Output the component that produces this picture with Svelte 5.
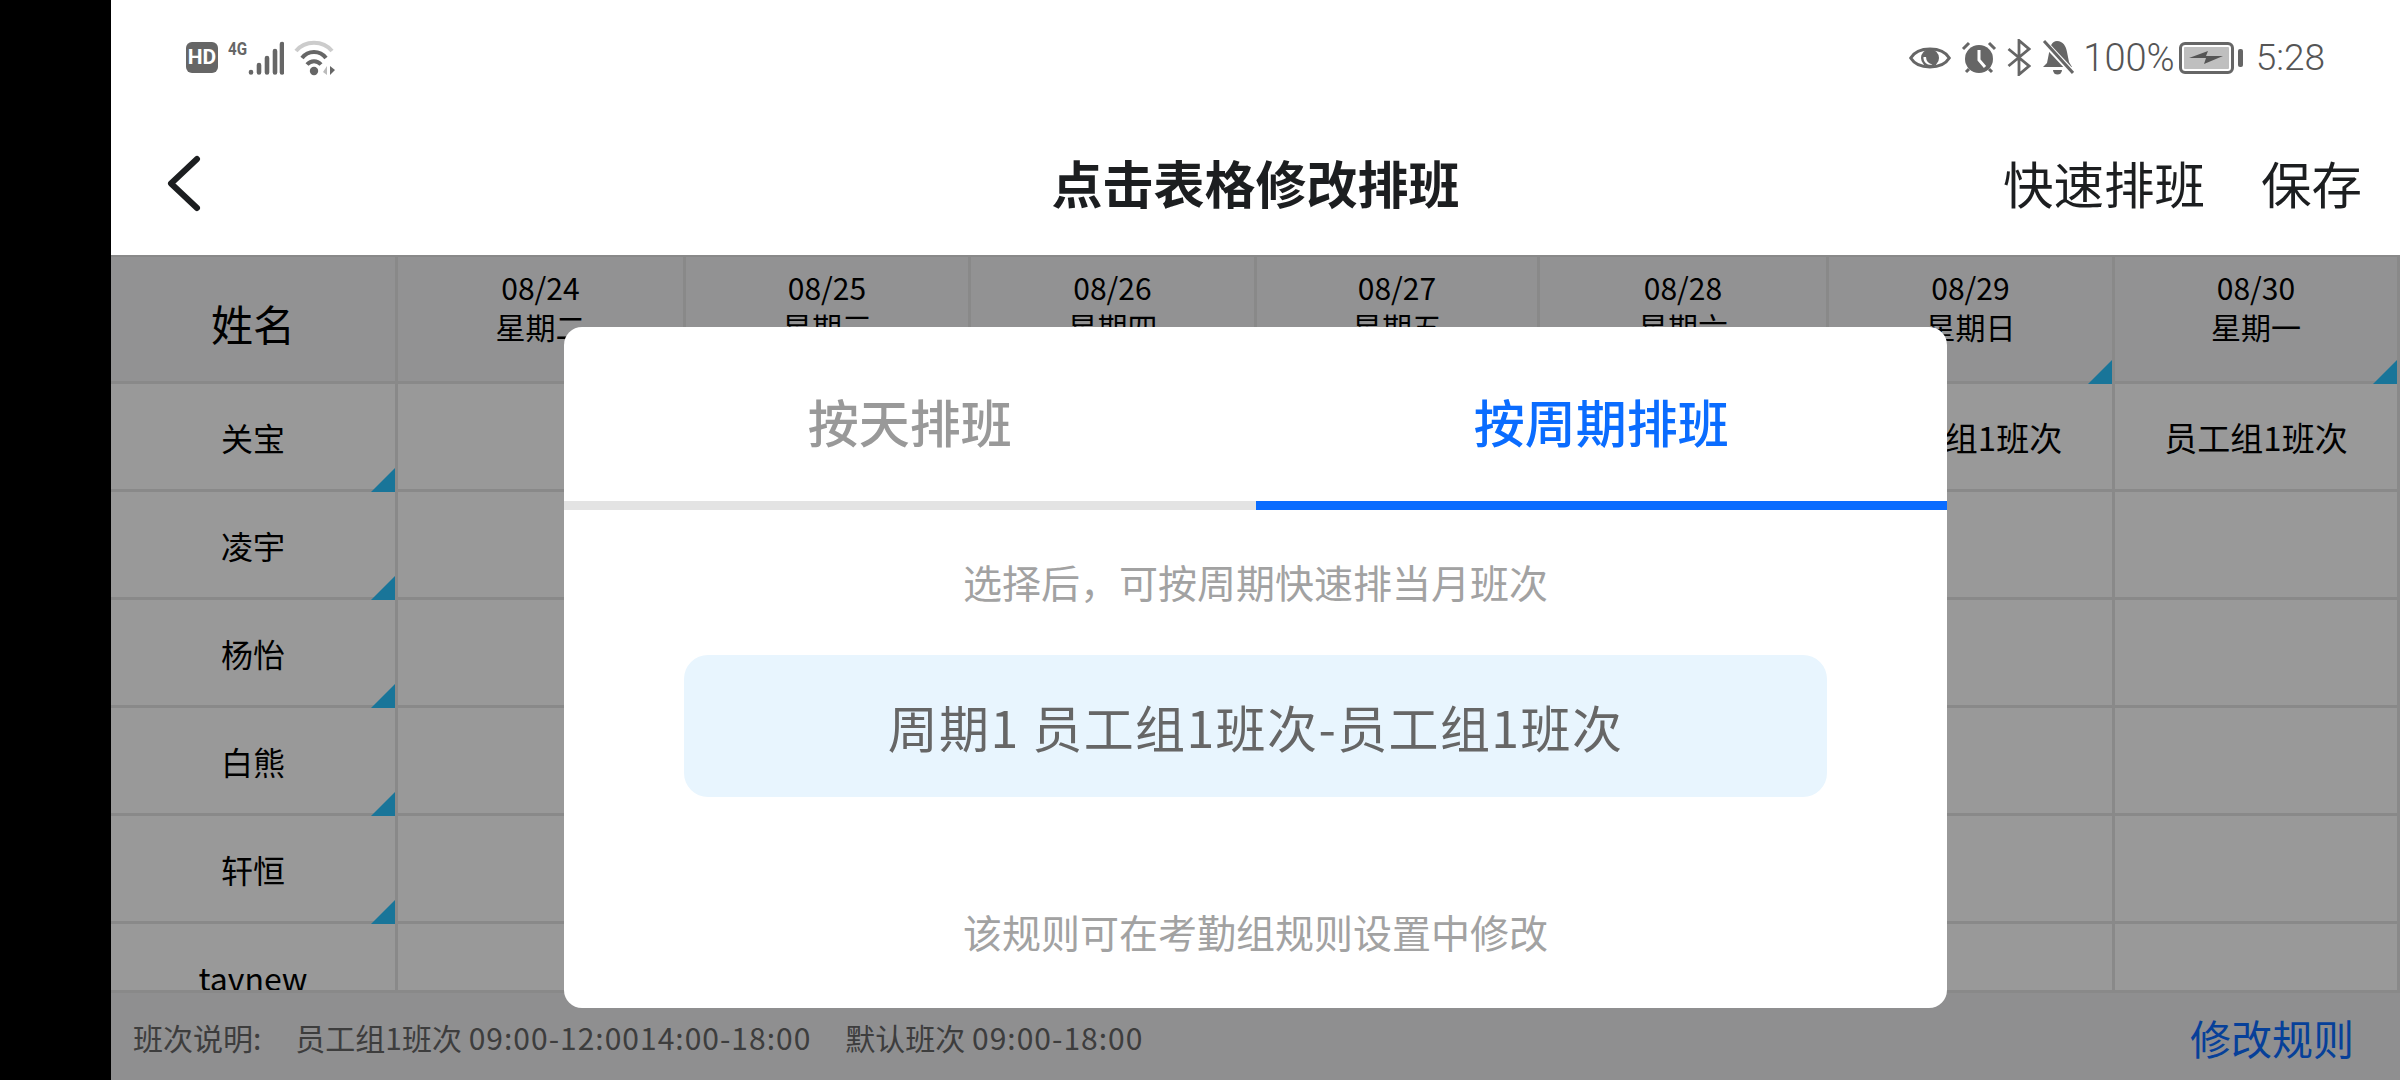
<script>
  const days = [
    { date: '08/24', week: '星期二' },
    { date: '08/25', week: '星期三' },
    { date: '08/26', week: '星期四' },
    { date: '08/27', week: '星期五' },
    { date: '08/28', week: '星期六' },
    { date: '08/29', week: '星期日' },
    { date: '08/30', week: '星期一' }
  ];
  const staff = ['关宝', '凌宇', '杨怡', '白熊', '轩恒', 'tavnew'];
  const shift = '员工组1班次';
</script>

<div class="screen">
  <div class="bezel"></div>
  <div class="page">
    <div class="status">
      <div class="status-group">
        <span class="hd">HD</span>
        <div class="signal">
          <span class="net">4G</span>
          <svg width="36" height="34" viewBox="0 0 36 34">
            <g stroke="#666" stroke-width="4.6" stroke-linecap="round">
              <path d="M3 31.5v-.5M11 31.5V24M19 31.5V17M27 31.5V10M34 31.5V3" />
            </g>
          </svg>
        </div>
        <svg class="wifi" width="42" height="36" viewBox="0 0 42 36">
          <path d="M2 11C11 0 29 0 38 11" fill="none" stroke="#ccc" stroke-width="4" />
          <path d="M8 18C14 10 26 10 32 18" fill="none" stroke="#666" stroke-width="4" />
          <path d="M13 24.5C17 20 23 20 27 24.5" fill="none" stroke="#666" stroke-width="4" />
          <circle cx="20" cy="31" r="4.2" fill="#666" />
          <path d="M33 26v9l-4-3z" fill="#bbb" />
          <path d="M36 26v9l5-5z" fill="#666" />
        </svg>
      </div>
      <div class="status-group right">
        <svg width="42" height="28" viewBox="0 0 42 28">
          <path d="M1.7 14C9 2 33 2 40.3 14 33 26 9 26 1.7 14Z" fill="none" stroke="#666" stroke-width="3" />
          <circle cx="21" cy="14" r="9" fill="#666" />
          <path d="M14.5 13a7 7 0 0 0 9 7.5A8 8 0 0 1 17 13z" fill="#fff" />
        </svg>
        <svg width="36" height="33" viewBox="0 0 36 33">
          <circle cx="18" cy="18" r="14" fill="#666" />
          <path d="M18 9v10l6 7" fill="none" stroke="#fff" stroke-width="3" />
          <path d="M2 8l6-6M34 8l-6-6M5 31l3-3M31 31l-3-3" stroke="#666" stroke-width="3" />
        </svg>
        <svg width="24" height="37" viewBox="0 0 24 37">
          <path d="M1.5 10L22 27l-10 8.5V1.5L22 10 1.5 27" fill="none" stroke="#666" stroke-width="2.8" />
        </svg>
        <svg width="33" height="35" viewBox="0 0 33 35">
          <path d="M16 1c6 0 9 5 10 11l2 10 3 5H2l4-4 2-10c1-7 3-12 8-12z" fill="#666" />
          <path d="M12 30h9a4.5 4.5 0 0 1-9 0z" fill="#666" />
          <path d="M2 1l30 32" stroke="#fff" stroke-width="6" />
          <path d="M3 1l29 32" stroke="#666" stroke-width="3" />
        </svg>
        <span class="status-text percent">100%</span>
        <div class="battery">
          <div class="battery-body">
            <svg width="34" height="15" viewBox="0 0 34 15">
              <path d="M0 8l19-7-2 5h17l-19 8 2-6z" fill="#555" />
            </svg>
          </div>
          <div class="battery-nub"></div>
        </div>
        <span class="status-text clock">5:28</span>
      </div>
    </div>

    <div class="nav">
      <svg class="back" width="36" height="60" viewBox="0 0 36 60">
        <path d="M32 4L6 28.500l26 24.500" fill="none" stroke="#1c1e20" stroke-width="6" stroke-linecap="round" stroke-linejoin="round" />
      </svg>
      <div class="title">点击表格修改排班</div>
      <div class="actions">
        <span>快速排班</span>
        <span>保存</span>
      </div>
    </div>

    <div class="content">
      <div class="table">
        <div class="row head">
          <div class="cell name-head">姓名</div>
          {#each days as d}
            <div class="cell day corner">
              <div>{d.date}</div>
              <div>{d.week}</div>
            </div>
          {/each}
        </div>
        {#each staff as name, i}
          <div class="row">
            <div class="cell name corner">{name}</div>
            {#each days as d, j}
              <div class="cell" class:shift={i === 0 && j >= 5}>{i === 0 && j >= 5 ? shift : ''}</div>
            {/each}
          </div>
        {/each}
      </div>

      <div class="footer">
        <span class="label">班次说明:</span>
        <span class="item">员工组1班次 <span class="time">09:00-12:0014:00-18:00</span></span>
        <span class="item">默认班次 <span class="time">09:00-18:00</span></span>
        <span class="edit">修改规则</span>
      </div>

      <div class="mask">
        <div class="modal">
          <div class="tabs">
            <div class="tab">按天排班</div>
            <div class="tab active">按周期排班</div>
          </div>
          <div class="hint">选择后，可按周期快速排当月班次</div>
          <div class="option">周期1 员工组1班次-员工组1班次</div>
          <div class="hint note">该规则可在考勤组规则设置中修改</div>
        </div>
      </div>
    </div>
  </div>
</div>

<style>
  :global(body) {
    margin: 0;
    background: #000;
  }

  .screen {
    width: 2400px;
    height: 1080px;
    display: flex;
    overflow: hidden;
    font-family: "Noto Sans CJK SC", "Noto Sans", sans-serif;
  }

  .bezel {
    width: 111px;
    flex: none;
    background: #000;
  }

  .page {
    flex: 1;
    min-width: 0;
    display: flex;
    flex-direction: column;
    background: #fff;
  }

  /* status bar */
  .status {
    height: 115px;
    flex: none;
    display: flex;
    justify-content: space-between;
    align-items: center;
    padding: 0 75px;
    box-sizing: border-box;
  }

  .status-group {
    display: flex;
    align-items: center;
    gap: 10px;
  }

  .hd {
    width: 32px;
    height: 31px;
    border-radius: 6px;
    background: #666;
    color: #fff;
    font-family: "Roboto", sans-serif;
    font-size: 21px;
    font-weight: 700;
    line-height: 31px;
    text-align: center;
  }

  .signal {
    display: flex;
    align-items: flex-start;
    height: 34px;
  }

  .net {
    font-family: "Roboto", sans-serif;
    font-size: 19px;
    font-weight: 700;
    line-height: 15px;
    color: #666;
    width: 20px;
    transform: scaleX(0.8);
    transform-origin: left;
  }

  .status-text {
    font-family: "Roboto", sans-serif;
    font-size: 37px;
    font-weight: 300;
    color: #555;
    line-height: 36px;
  }

  .percent {
    font-size: 38px;
    margin: 0 -6px -1px -1px;
  }

  .battery {
    display: flex;
    align-items: center;
    gap: 4px;
  }

  .battery-body {
    width: 55px;
    height: 32px;
    box-sizing: border-box;
    border: 3px solid #666;
    border-radius: 6px;
    background: #bfbfbf;
    box-shadow: inset 0 0 0 2px #fff;
    display: flex;
    align-items: center;
    justify-content: center;
  }

  .battery-nub {
    width: 5px;
    height: 18px;
    border-radius: 2px;
    background: #666;
  }

  .clock {
    margin-left: 3px;
  }

  /* title bar */
  .nav {
    height: 140px;
    flex: none;
    box-sizing: border-box;
    display: grid;
    grid-template-columns: 1fr auto 1fr;
    align-items: center;
    padding: 0 38px 6px;
    color: #1c1e20;
  }

  .back {
    margin: 6px 0 0 16px;
  }

  .title {
    font-size: 51px;
    font-weight: 700;
    line-height: 60px;
  }

  .actions {
    display: flex;
    justify-content: flex-end;
    gap: 56px;
    font-size: 50.500px;
    line-height: 60px;
  }

  /* table */
  .content {
    flex: 1;
    min-height: 0;
    position: relative;
    display: flex;
    flex-direction: column;
  }

  .table {
    flex: 1;
    min-height: 0;
    overflow: hidden;
    border-top: 2px solid #e4e4e4;
  }

  .row {
    display: grid;
    grid-template-columns: 287px 288px 285px 286px 283px 289px 286px 285px;
    height: 108px;
  }

  .row.head {
    height: 127px;
    background: #f3f3f5;
  }

  .cell {
    position: relative;
    box-sizing: border-box;
    border-right: 3px solid #e4e4e4;
    border-bottom: 3px solid #e4e4e4;
    display: flex;
    align-items: center;
    justify-content: center;
    font-size: 32px;
    color: #000;
  }

  .cell.shift {
    font-size: 33px;
  }

  .name-head {
    font-size: 42px;
    padding-top: 6px;
  }

  .day {
    flex-direction: column;
    justify-content: flex-start;
    padding-top: 11px;
    font-size: 30px;
    line-height: 39px;
  }

  .corner::after {
    content: "";
    position: absolute;
    right: 0;
    bottom: -3px;
    width: 24px;
    height: 24px;
    background: #2bc3ff;
    clip-path: polygon(100% 0, 100% 100%, 0 100%);
  }

  .footer {
    height: 90px;
    flex: none;
    box-sizing: border-box;
    border-top: 3px solid #e4e4e4;
    background: #eeeef1;
    display: flex;
    align-items: center;
    padding: 0 46px 0 22px;
    font-size: 30px;
    color: #666;
  }

  .time {
    letter-spacing: 1px;
  }

  .label {
    margin-right: 34px;
  }

  .item {
    margin-right: 34px;
  }

  .edit {
    margin-left: auto;
    font-size: 41px;
    color: #0a6cff;
  }

  /* dialog */
  .mask {
    position: absolute;
    inset: 0;
    background: rgba(0, 0, 0, 0.4);
    display: flex;
    align-items: center;
    justify-content: center;
  }

  .modal {
    width: 1383px;
    height: 681px;
    background: #fff;
    border-radius: 18px;
    overflow: hidden;
    display: flex;
    flex-direction: column;
    align-items: center;
  }

  .tabs {
    width: 100%;
    display: flex;
    flex: none;
  }

  .tab {
    flex: 1;
    height: 183px;
    box-sizing: border-box;
    border-bottom: 9px solid #e3e3e3;
    padding-top: 61px;
    text-align: center;
    font-size: 51px;
    font-weight: 500;
    line-height: 66px;
    color: #999;
  }

  .tab.active {
    color: #0a6cff;
    border-bottom-color: #0a6cff;
  }

  .hint {
    margin-top: 45px;
    font-size: 39px;
    line-height: 52px;
    color: #a2a2a2;
  }

  .option {
    margin-top: 48px;
    width: 1143px;
    height: 142px;
    flex: none;
    border-radius: 24px;
    background: #e8f5fe;
    display: flex;
    align-items: center;
    justify-content: center;
    font-size: 50px;
    letter-spacing: 1.4px;
    color: #666;
  }

  .note {
    margin-top: 108px;
  }
</style>
